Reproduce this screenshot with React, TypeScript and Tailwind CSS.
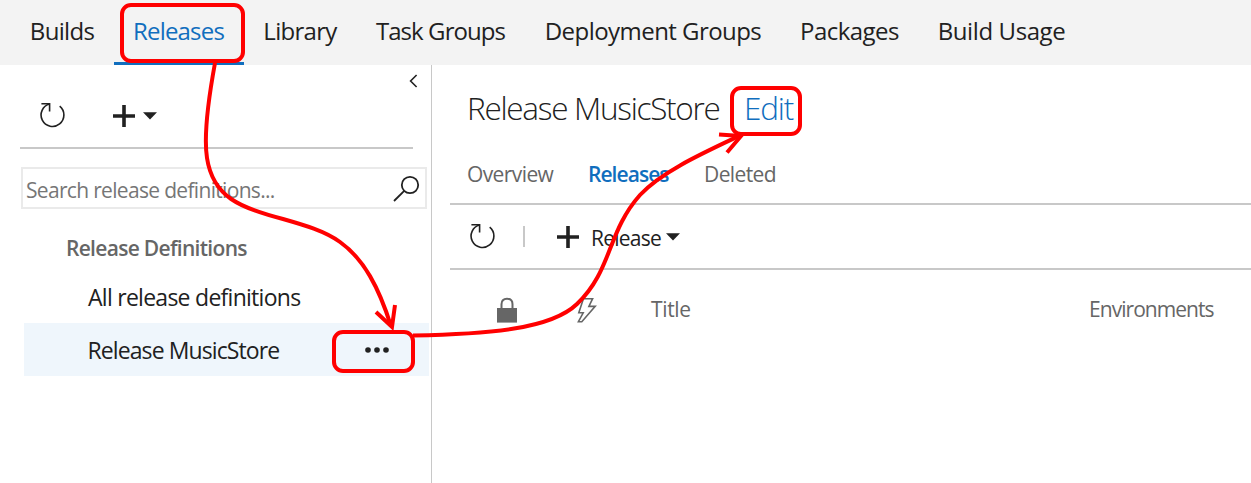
import type { ReactNode } from "react";

const tabs = [
  { label: "Builds", box: "w-[104px]", text: "tracking-[-0.7px] text-[#212121]" },
  { label: "Releases", box: "w-[130px] border-[#106ebe] pr-px", text: "tracking-[-0.8px] text-[#106ebe]" },
  { label: "Library", box: "w-[113px] pr-px", text: "tracking-[-0.7px] text-[#212121]" },
  { label: "Task Groups", box: "w-[168px] pr-px", text: "tracking-[-0.93px] text-[#212121]" },
  { label: "Deployment Groups", box: "w-[256px]", text: "tracking-[-0.55px] text-[#212121]" },
  { label: "Packages", box: "w-[138px] pr-px", text: "tracking-[-0.55px] text-[#212121]" },
  { label: "Build Usage", box: "w-[165px]", text: "tracking-[-0.4px] text-[#212121]" },
];

function RefreshIcon() {
  return (
    <svg width="28" height="28" viewBox="0 0 28 28" fill="none" stroke="#212121" strokeWidth="1.6">
      <path d="M20.7 5.2A11.4 11.4 0 1 1 10.6 3" />
      <path d="M2.4 2.7H10.6V10.6" />
    </svg>
  );
}

function PlusIcon() {
  return (
    <svg width="22" height="22" viewBox="0 0 22 22" fill="#212121">
      <path d="M9.2 0h3.6v9.2H22v3.6h-9.2V22H9.2v-9.2H0V9.2h9.2z" />
    </svg>
  );
}

function Caret() {
  return (
    <svg width="14" height="8" viewBox="0 0 14 8" fill="#212121">
      <path d="M0 0.3H14L7 7.6z" />
    </svg>
  );
}

function Line({ className, children }: { className: string; children: ReactNode }) {
  return <div className={`whitespace-nowrap ${className}`}>{children}</div>;
}

export default function App() {
  return (
    <div className="relative flex h-[483px] w-[1251px] flex-col overflow-hidden bg-white font-['Open_Sans','Noto_Sans',sans-serif] text-[#212121]">
      <nav className="flex h-[65px] shrink-0 bg-[#f3f3f3] pl-[10px]">
        {tabs.map((t) => (
          <div key={t.label} className={`flex justify-center border-b-3 ${t.box} ${t.label === "Releases" ? "" : "border-transparent"}`}>
            <span className={`whitespace-nowrap text-[24px] leading-[62px] ${t.text}`}>{t.label}</span>
          </div>
        ))}
      </nav>

      <div className="flex grow">
        <aside className="flex w-[432px] shrink-0 flex-col border-r border-[#c8c8c8]">
          <div className="flex h-[30px] justify-end pt-[9px] pr-[13px]">
            <svg width="9" height="14" viewBox="0 0 9 14" fill="none" stroke="#212121" strokeWidth="1.6">
              <path d="M7.6 1L1.6 7L7.6 13" />
            </svg>
          </div>
          <div className="ml-5 flex h-[54px] w-[393px] items-start border-b-2 border-[#c8c8c8] pt-[6px] pl-[19px]">
            <RefreshIcon />
            <div className="mt-[4px] ml-[46px] flex items-center">
              <PlusIcon />
              <div className="ml-[8px]"><Caret /></div>
            </div>
          </div>
          <div className="mt-[18px] ml-[21px] flex h-[42px] w-[406px] justify-between border-2 border-[#eaeaea] pr-[5px] pl-[3px]">
            <Line className="pt-[6px] text-[21px] leading-[30px] tracking-[-0.68px] text-[#767676]">Search release definitions...</Line>
            <svg className="mt-[6px]" width="28" height="28" viewBox="0 0 28 28" fill="none" stroke="#212121" strokeWidth="1.8">
              <circle cx="18" cy="10" r="8.2" />
              <path d="M12.2 15.8L2 26" />
            </svg>
          </div>
          <Line className="mt-[24px] pl-[66px] text-[21px] leading-[30px] font-semibold tracking-[-0.7px] text-[#666666]">Release Definitions</Line>
          <Line className="mt-[8px] h-[52px] pl-[88px] text-[23px] leading-[52px] tracking-[-0.73px]">All release definitions</Line>
          <div className="ml-[24px] flex h-[53px] w-[405px] items-center bg-[#eff6fc] pl-[63.5px]">
            <Line className="w-[277.5px] text-[23px] leading-[52px] tracking-[-0.9px]">Release MusicStore</Line>
            <svg width="24" height="6" viewBox="0 0 24 6" fill="#212121">
              <circle cx="3" cy="3" r="2.8" />
              <circle cx="12" cy="3" r="2.8" />
              <circle cx="21" cy="3" r="2.8" />
            </svg>
          </div>
        </aside>

        <main className="flex grow flex-col pl-[18px]">
          <div className="flex h-[88px] pl-[17px] leading-[86px] font-light">
            <Line className="w-[277px] text-[31.5px] tracking-[-1.28px]">Release MusicStore</Line>
            <Line className="text-[31.5px] tracking-[-1.2px] text-[#106ebe]">Edit</Line>
          </div>
          <div className="flex h-[52px] border-b-2 border-[#c8c8c8] pl-[17px] text-[21px] leading-[42px] text-[#666666]">
            <Line className="w-[121px] tracking-[-0.6px]">Overview</Line>
            <Line className="w-[116px] font-semibold tracking-[-0.95px] text-[#106ebe]">Releases</Line>
            <Line className="tracking-[-0.6px]">Deleted</Line>
          </div>
          <div className="flex h-[65px] items-center border-b-2 border-[#c8c8c8] pl-[18.5px]">
            <div className="pb-px"><RefreshIcon /></div>
            <div className="ml-[26.5px] h-[21px] w-[2px] bg-[#c8c8c8]" />
            <div className="ml-[31.5px]"><PlusIcon /></div>
            <Line className="w-[87.5px] pt-[2px] pl-[12.5px] text-[21px] leading-[60px] tracking-[-0.75px]">Release</Line>
            <Caret />
          </div>
          <div className="flex h-[80px] text-[21px] leading-[78px] text-[#666666]">
            <svg className="mt-[27px] ml-[47px]" width="20" height="27" viewBox="0 0 20 27">
              <path d="M4.5 12V7.3C4.5 3.5 6.8 1.7 10 1.7s5.5 1.8 5.5 5.6V12" fill="none" stroke="#666666" strokeWidth="2" />
              <path d="M0 11h20v14.6H0z" fill="#666666" />
            </svg>
            <svg className="mt-[27px] ml-[59px]" width="22" height="27" viewBox="0 0 22 27" fill="none" stroke="#666666" strokeWidth="1.6">
              <path d="M7.4 1.7H16.6L12.9 9.4H19.2L5.8 24.7H2.4L7.2 15.8H2.8z" />
            </svg>
            <Line className="ml-[53px] w-[438px] tracking-[-0.35px]">Title</Line>
            <Line className="tracking-[-0.95px]">Environments</Line>
          </div>
        </main>
      </div>

      <svg className="pointer-events-none absolute top-0 left-0" width="1251" height="483" fill="none" stroke="#ff0000" strokeWidth="4">
        <rect x="122" y="5" width="121" height="56" rx="9" />
        <rect x="732" y="88" width="68" height="46" rx="9" />
        <rect x="334" y="332" width="79" height="39" rx="9" />
        <path d="M215 63C206 112 204 139 207 158C213 197 240 208 283 219C304 225 325 231 340 242C364 259 379 288 391 326" />
        <path d="M376 312L392 327L395 305" />
        <path d="M413 335.5C490 334 551 329 577 304C612 271 607 232 640 195C661 172 703 153 739 136" />
        <path d="M719 134.5L741 136L727 152.5" />
      </svg>
    </div>
  );
}
